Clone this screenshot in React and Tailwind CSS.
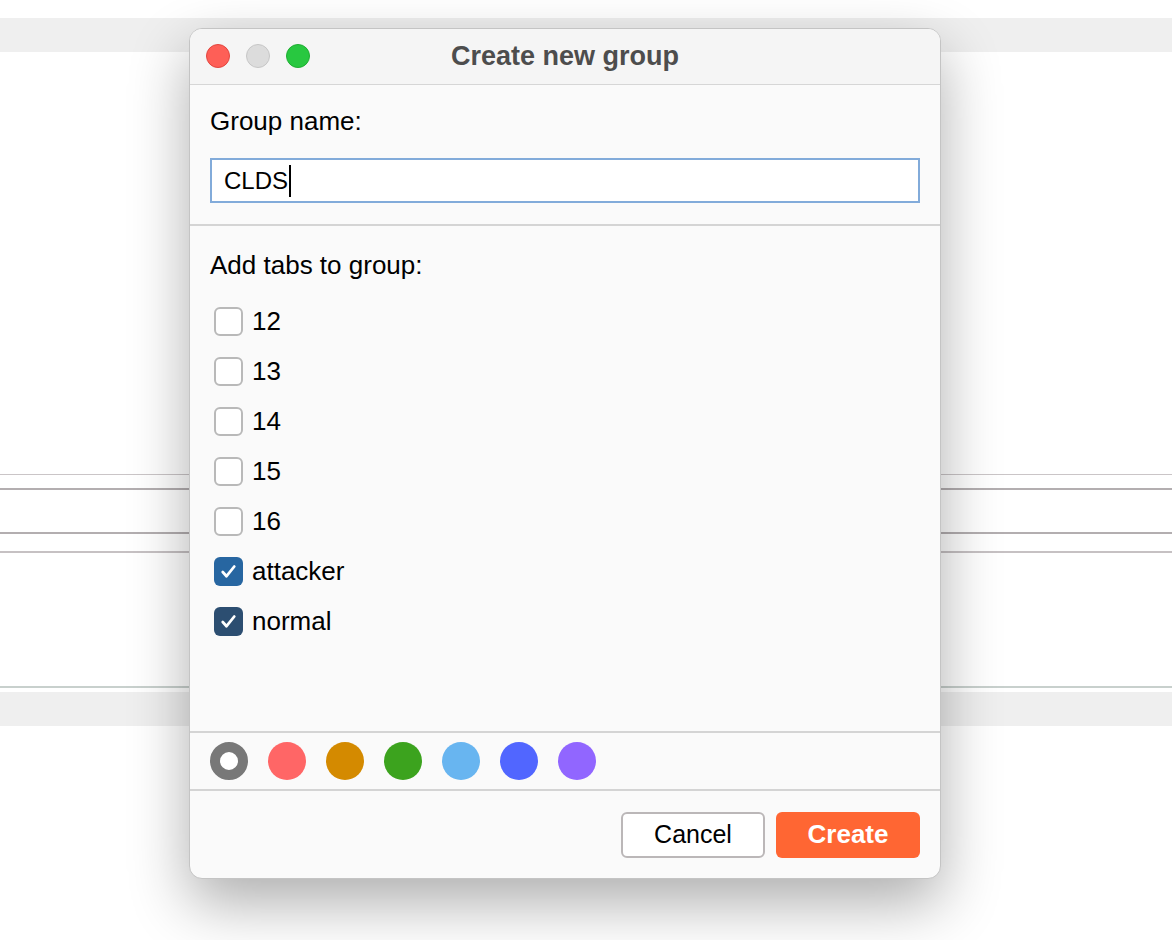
// App.jsx
// "Create new group" modal over a faded app window

import React from 'react';

const tabs = [
  { name: '12', checked: false },
  { name: '13', checked: false },
  { name: '14', checked: false },
  { name: '15', checked: false },
  { name: '16', checked: false },
  { name: 'attacker', checked: true, color: 'bg-[#2766a1]' },
  { name: 'normal', checked: true, color: 'bg-[#2c4e71]' },
];

const swatches = ['bg-[#ff6666]', 'bg-[#d48a00]', 'bg-[#3ca31e]', 'bg-[#68b5f0]', 'bg-[#5166ff]', 'bg-[#9166ff]'];

const Check = ({ checked, color }) =>
  checked ? (
    <span className={`w-[29px] h-[29px] rounded-[6px] inline-flex items-center justify-center ${color}`}>
      <svg width="21" height="21" viewBox="0 0 16 16" fill="none">
        <path d="M3.6 8.4l2.9 3.2 5.9-7.4" stroke="white" strokeWidth="2.1" strokeLinecap="round" strokeLinejoin="round" />
      </svg>
    </span>
  ) : (
    <span className="w-[29px] h-[29px] rounded-[6px] border-2 border-[#b9b9b9] bg-white" />
  );

export default function App() {
  return (
    <div className="relative w-[1172px] h-[940px] bg-white overflow-hidden [font-family:'Liberation_Sans',Arial,sans-serif] text-black">
      {/* background window */}
      <div className="flex flex-col">
        <div className="h-[18px]" />
        <div className="h-[34px] bg-[#efefef]" />
        <div className="h-[422px]" />
        <div className="h-px bg-[#cac5c7]" />
        <div className="h-[13px]" />
        <div className="h-[2px] bg-[#b3aeb0]" />
        <div className="h-[42px]" />
        <div className="h-[2px] bg-[#b3aeb0]" />
        <div className="h-[17px]" />
        <div className="h-[2px] bg-[#c6c1c3]" />
        <div className="h-[133px]" />
        <div className="h-[2px] bg-[#c8d0cd]" />
        <div className="h-[4px]" />
        <div className="h-[34px] bg-[#efefef]" />
      </div>

      {/* dialog */}
      <div className="absolute left-[189px] top-[28px] w-[752px] h-[851px] rounded-[13px] border border-[#c4c4c4] bg-[#fafafa] overflow-hidden flex flex-col shadow-[0_24px_60px_rgba(0,0,0,0.32)]">
        <div className="relative h-[56px] shrink-0 bg-[#f5f5f5] border-b border-[#d6d6d6] flex items-center justify-center">
          <div className="absolute left-[16px] top-[15px] flex gap-[16px]">
            <span className="w-[24px] h-[24px] rounded-full bg-[#fe5f57] border border-[#e2463f]" />
            <span className="w-[24px] h-[24px] rounded-full bg-[#dcdcdc] border border-[#c6c6c6]" />
            <span className="w-[24px] h-[24px] rounded-full bg-[#28c840] border border-[#1fae32]" />
          </div>
          <span className="text-[27px] leading-[30px] font-bold text-[#4d4d4d] -mt-[1px]">Create new group</span>
        </div>

        <div className="h-[141px] shrink-0 px-[20px] pt-[23px] border-b-2 border-[#d4d4d4]">
          <div className="text-[26px] leading-[26px]">Group name:</div>
          <div className="mt-[24px] h-[45px] border-2 border-[#82abda] bg-white flex items-center pl-[12px] text-[24px]">
            CLDS
            <span className="w-[2px] h-[32px] bg-black ml-px" />
          </div>
        </div>

        <div className="flex-1 px-[20px] pt-[26px] border-b-2 border-[#d4d4d4]">
          <div className="text-[26px] leading-[26px]">Add tabs to group:</div>
          <div className="mt-[18px] flex flex-col">
            {tabs.map((t) => (
              <div key={t.name} className="h-[50px] flex items-center gap-[9px] pl-[4px]">
                <Check checked={t.checked} color={t.color} />
                <span className="text-[26px] leading-[26px]">{t.name}</span>
              </div>
            ))}
          </div>
        </div>

        <div className="h-[58px] shrink-0 flex items-center gap-[20px] px-[20px] border-b-2 border-[#d4d4d4]">
          <span className="w-[38px] h-[38px] rounded-full border-[10px] border-[#787878] bg-white" />
          {swatches.map((c) => (
            <span key={c} className={`w-[38px] h-[38px] rounded-full ${c}`} />
          ))}
        </div>

        <div className="h-[87px] shrink-0 flex items-center justify-end gap-[11px] px-[20px]">
          <button className="w-[144px] h-[46px] rounded-[6px] border-2 border-[#bbb7b8] bg-white text-[25px]">Cancel</button>
          <button className="w-[144px] h-[46px] rounded-[6px] bg-[#ff6633] text-white font-bold text-[26px]">Create</button>
        </div>
      </div>
    </div>
  );
}
